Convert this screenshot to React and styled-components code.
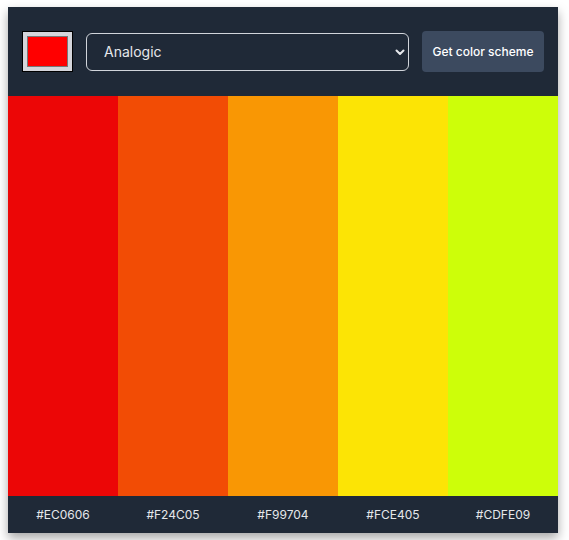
import { useState } from "react";
import styled, { createGlobalStyle } from "styled-components";

const colors = ["#EC0606", "#F24C05", "#F99704", "#FCE405", "#CDFE09"];

const GlobalStyle = createGlobalStyle`
  body {
    margin: 0;
    padding: 7px 8px;
    background: #ffffff;
    font-family: Inter, "Liberation Sans", sans-serif;
  }
`;

const App = () => {
    const [seed, setSeed] = useState("#ff0000");
    const [mode, setMode] = useState("analogic");

    return (
        <>
            <GlobalStyle />
            <Card>
                <Header>
                    <ColorPicker
                        type="color"
                        value={seed}
                        onChange={(e) => setSeed(e.target.value)}
                    />
                    <SelectWrap>
                        <ModeSelect value={mode} onChange={(e) => setMode(e.target.value)}>
                            <option value="monochrome">Monochrome</option>
                            <option value="analogic">Analogic</option>
                            <option value="complement">Complement</option>
                            <option value="triad">Triad</option>
                        </ModeSelect>
                        <Chevron width="12" height="12" viewBox="0 0 12 12">
                            <path d="M2.5 4.5 L6 8 L9.5 4.5" fill="none" stroke="#e5e7eb" strokeWidth="2" strokeLinecap="round" strokeLinejoin="round" />
                        </Chevron>
                    </SelectWrap>
                    <SchemeButton>Get color scheme</SchemeButton>
                </Header>
                <Swatches>
                    {colors.map((c) => (
                        <Swatch key={c} $color={c} />
                    ))}
                </Swatches>
                <Footer>
                    {colors.map((c) => (
                        <HexLabel key={c}>{c}</HexLabel>
                    ))}
                </Footer>
            </Card>
        </>
    );
};

export default App;

const Card = styled.div`
    width: 550px;
    background: #1f2937;
    box-shadow: 0 5px 10px rgba(0, 0, 0, 0.35);
`;

const Header = styled.div`
    height: 89px;
    box-sizing: border-box;
    padding: 0 14px;
    display: flex;
    align-items: center;
    gap: 13px;
`;

const ColorPicker = styled.input`
    -webkit-appearance: none;
    appearance: none;
    width: 51px;
    height: 41px;
    margin: 0;
    padding: 0;
    border: 1px solid #000;
    background: #d4d5db;
    box-sizing: border-box;
    cursor: pointer;
    flex-shrink: 0;
    &::-webkit-color-swatch-wrapper {
        padding: 4px 4px;
    }
    &::-webkit-color-swatch {
        border: 1px solid #777;
        border-radius: 0;
    }
`;

const SelectWrap = styled.div`
    position: relative;
    flex: 1;
    display: flex;
`;

const ModeSelect = styled.select`
    -webkit-appearance: none;
    appearance: none;
    width: 100%;
    height: 38px;
    padding: 0 30px 0 17px;
    background: transparent;
    color: #e5e7eb;
    border: 1px solid #d1d5db;
    border-radius: 6px;
    font-family: Inter, "Liberation Sans", sans-serif;
    font-size: 14px;
    outline: none;
    cursor: pointer;
    option {
        color: #111827;
    }
`;

const Chevron = styled.svg`
    position: absolute;
    right: 3px;
    top: 13px;
    pointer-events: none;
`;

const SchemeButton = styled.button`
    flex-shrink: 0;
    width: 122px;
    height: 41px;
    border: none;
    border-radius: 4px;
    background: #3c4a5f;
    color: #ffffff;
    font-family: Inter, "Liberation Sans", sans-serif;
    font-size: 12px;
    font-weight: 500;
    cursor: pointer;
`;

const Swatches = styled.div`
    display: grid;
    grid-template-columns: repeat(5, 1fr);
    height: 400px;
`;

const Swatch = styled.div`
    background: ${(p) => p.$color};
`;

const Footer = styled.div`
    display: grid;
    grid-template-columns: repeat(5, 1fr);
    height: 37px;
    align-items: center;
`;

const HexLabel = styled.span`
    text-align: center;
    color: #e5e7eb;
    font-size: 12px;
`;
